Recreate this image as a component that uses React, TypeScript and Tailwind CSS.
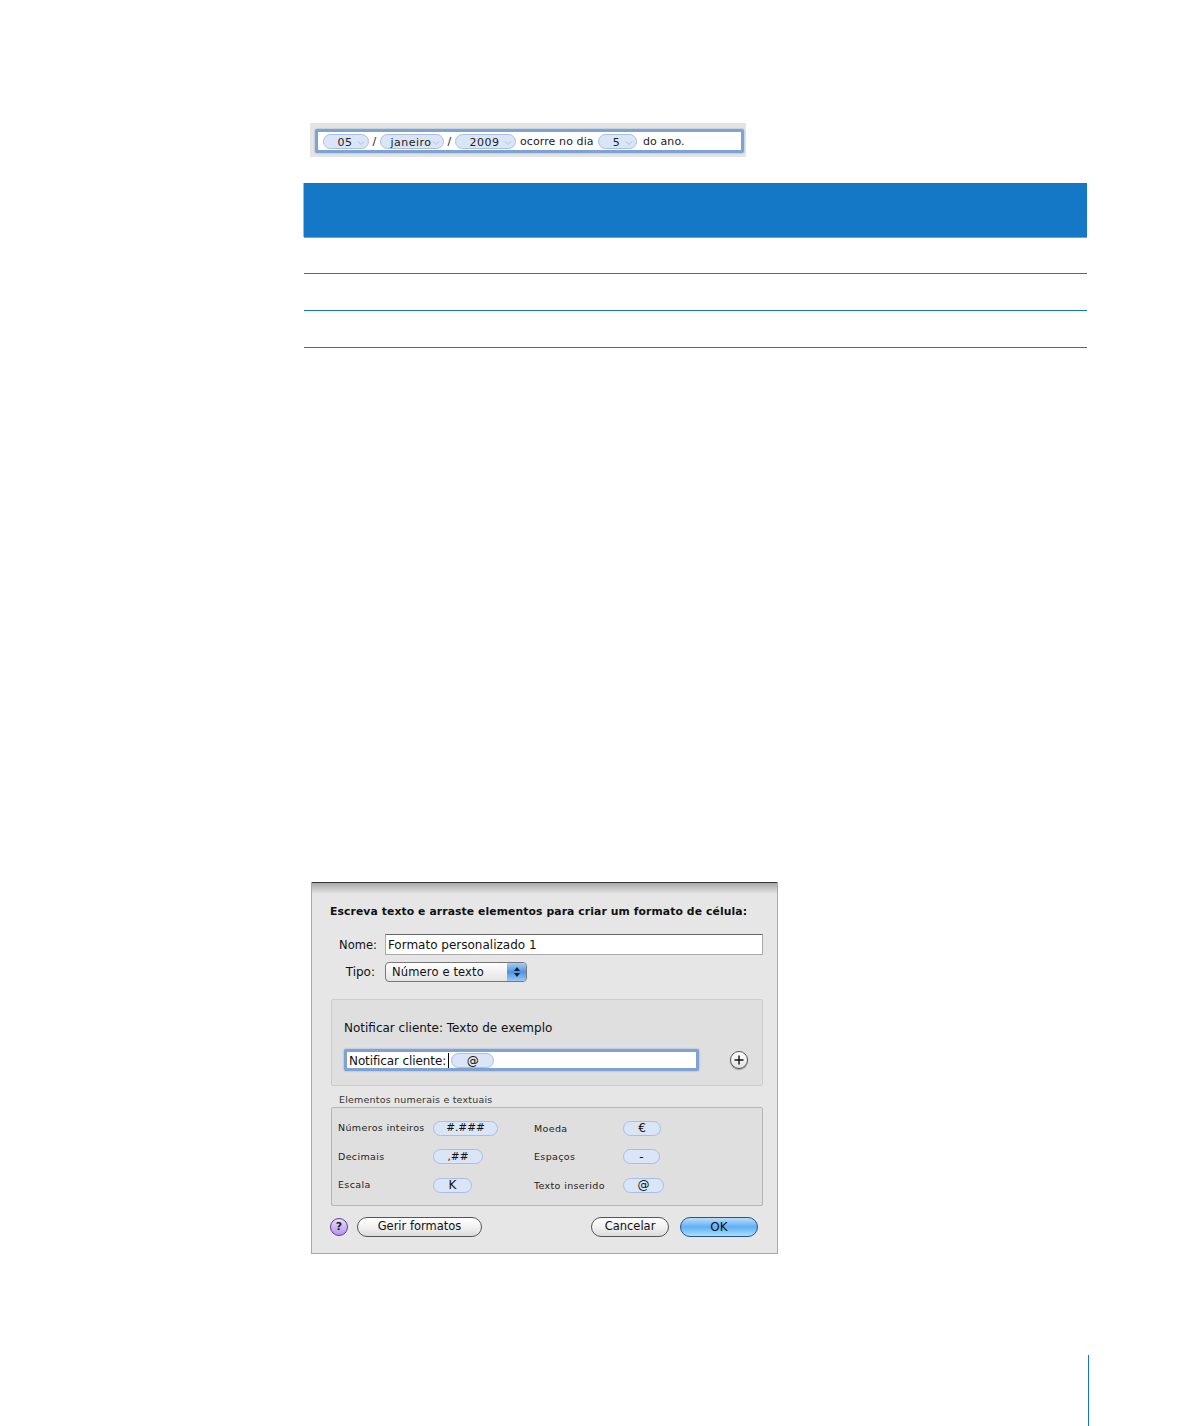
const font = "font-['DejaVu_Sans',sans-serif]";

function Chevron() {
  return (
    <svg width="8" height="6" viewBox="0 0 8 6" className="absolute right-[3px] top-[5px]">
      <path d="M1 1.5 L4 4.5 L7 1.5" fill="none" stroke="#aebcd6" strokeWidth="1" />
    </svg>
  );
}

function DatePill({ label, width }: { label: string; width: string }) {
  return (
    <div className={`relative h-[15px] rounded-full border border-[#a9bde6] bg-[#dbe5f8] pr-[2px] pt-[1px] text-center leading-[14px] tracking-[0.5px] ${width}`}>
      {label}
      <Chevron />
    </div>
  );
}

function Token({ label, width, textSize }: { label: string; width: string; textSize?: string }) {
  return (
    <div className={`flex items-center justify-center h-[15px] rounded-full border border-[#a9bde6] bg-[#dbe5f8] text-[#111] ${textSize ?? "text-[12px]"} ${width}`}>
      {label}
    </div>
  );
}

function ElementRow({ label, labelWidth, token, tokenWidth, h, labelPad, textSize }: { label: string; labelWidth: string; token: string; tokenWidth: string; h: string; labelPad?: string; textSize?: string }) {
  return (
    <div className={`flex items-center ${h}`}>
      <span className={`text-[9.5px] tracking-[0.35px] text-[#222] whitespace-nowrap ${labelWidth} ${labelPad ?? ""}`}>{label}</span>
      <Token label={token} width={tokenWidth} textSize={textSize} />
    </div>
  );
}

function MacButton({ label, width, margin }: { label: string; width: string; margin: string }) {
  return (
    <button className={`flex h-[20px] items-center justify-center rounded-full border border-[#555] bg-gradient-to-b from-[#ffffff] via-[#f1f1f1] to-[#dcdcdc] pb-[1px] text-[11.5px] leading-none text-[#111] ${width} ${margin}`}>
      {label}
    </button>
  );
}

export default function App() {
  return (
    <div className={`h-[1426px] w-[1188px] overflow-hidden bg-white pl-[304px] pt-[123px] ${font}`}>
      {/* date example */}
      <div className="ml-[6px] h-[34px] w-[436px] bg-[#e4e4e4] pl-[5px] pr-[2px] pt-[6px]">
        <div className="flex h-[24px] items-center rounded-[2px] border-[3px] border-[#7fa2d4] bg-white pl-[5px] text-[11px] tracking-[0.1px] text-[#222] shadow-[0_0_2px_#7fa2d4]">
          <DatePill label="05" width="w-[46px]" />
          <span className="w-[11px] pt-[2px] text-center">/</span>
          <DatePill label="janeiro" width="w-[64px]" />
          <span className="w-[11px] pt-[2px] text-center">/</span>
          <DatePill label="2009" width="w-[61px]" />
          <span className="ml-[4px] w-[78px] whitespace-nowrap pt-[2px]">ocorre no dia</span>
          <DatePill label="5" width="w-[39px]" />
          <span className="ml-[6px] whitespace-nowrap pt-[2px]">do ano.</span>
        </div>
      </div>

      {/* empty table */}
      <div className="mt-[26px] w-[783px]">
        <div className="h-[54px] bg-[#1478c6] shadow-[0_1px_0_#6aa6dc,-1px_0_0_#8fbde4]" />
        <div className="h-[37px] border-b border-[#1478c6]" />
        <div className="h-[37px] border-b border-[#1478c6]" />
        <div className="h-[37px] border-b border-[#1478c6]" />
      </div>

      {/* dialog */}
      <div className="ml-[7px] mt-[534px] h-[372px] w-[467px] border-x border-b border-[#a8a8a8] bg-[#e6e6e6] text-[#111]">
        <div className="h-[12px] border-t border-[#333] bg-gradient-to-b from-[#a9a9a9] to-[#e6e6e6]" />
        <div className="pl-[19px] pr-[14px]">
          <div className="-ml-[1px] mt-[11px] h-[14px] text-[10.8px] font-bold leading-[14px] tracking-[0.1px] whitespace-nowrap">
            Escreva texto e arraste elementos para criar um formato de célula:
          </div>

          <div className="mt-[15px] flex items-center">
            <span className="w-[46px] pt-[2px] text-right text-[11.5px]">Nome:</span>
            <div className="ml-[8px] flex h-[21px] w-[379px] items-center border border-[#aaa] border-t-[#666] bg-white pl-[2px] pt-[1px] text-[12px]">
              Formato personalizado 1
            </div>
          </div>

          <div className="mt-[7px] flex items-center">
            <span className="w-[44px] text-right text-[12px]">Tipo:</span>
            <div className="ml-[10px] flex h-[20px] w-[142px] items-center overflow-hidden rounded-[4px] border border-[#777] bg-gradient-to-b from-[#ffffff] to-[#e4e4e4]">
              <span className="w-[121px] pl-[6px] pt-[1px] text-[11.5px] tracking-[0.15px] whitespace-nowrap">Número e texto</span>
              <div className="flex h-full flex-1 items-center justify-center bg-gradient-to-b from-[#a8cdf5] via-[#4f93e0] to-[#9cc9f5]">
                <svg width="8" height="12" viewBox="0 0 8 12">
                  <path d="M4 1 L7 5 H1 Z M4 11 L1 7 H7 Z" fill="#10203a" />
                </svg>
              </div>
            </div>
          </div>

          <div className="mt-[17px] h-[87px] w-[432px] rounded-[2px] border border-[#cbcbcb] bg-[#dfdfdf] pl-[12px]">
            <div className="mt-[20px] h-[16px] text-[12px] leading-[16px]">Notificar cliente: Texto de exemplo</div>
            <div className="mt-[13px] flex items-center">
              <div className="flex h-[22px] w-[355px] items-center rounded-[2px] border-[3px] border-[#7fa2d4] bg-white pl-[2px] pt-[1px] text-[12px] shadow-[0_0_2px_#7fa2d4]">
                <span className="whitespace-nowrap tracking-[-0.1px]">Notificar cliente:</span>
                <div className="ml-[2px] h-[15px] w-px bg-black" />
                <Token label="@" width="w-[43px] ml-[2px]" />
              </div>
              <div className="ml-[31px] flex h-[18px] w-[18px] items-center justify-center rounded-full border border-[#555] bg-gradient-to-b from-[#ffffff] to-[#e2e2e2] shadow-[0_1px_1px_#999]">
                <svg width="10" height="10" viewBox="0 0 10 10">
                  <path d="M5 0.5 V9.5 M0.5 5 H9.5" stroke="#111" strokeWidth="1.4" />
                </svg>
              </div>
            </div>
          </div>

          <div className="ml-[8px] mt-[7px] h-[14px] text-[9.5px] leading-[13px] tracking-[0.2px] text-[#333]">Elementos numerais e textuais</div>
          <div className="flex h-[99px] w-[432px] rounded-[2px] border border-[#b4b4b4] bg-[#dfdfdf] pl-[6px] pt-[6px]">
            <div className="w-[196px]">
              <ElementRow label="Números inteiros" labelWidth="w-[95px]" token="#.###" tokenWidth="w-[65px]" textSize="text-[10.5px]" h="h-[28px]" />
              <ElementRow label="Decimais" labelWidth="w-[95px]" labelPad="pt-[2px]" token=",##" tokenWidth="w-[50px]" textSize="text-[10.5px]" h="h-[29px]" />
              <ElementRow label="Escala" labelWidth="w-[95px]" token="K" tokenWidth="w-[39px]" h="h-[28px]" />
            </div>
            <div>
              <ElementRow label="Moeda" labelWidth="w-[89px]" labelPad="pt-[2px]" token="€" tokenWidth="w-[38px]" h="h-[28px]" />
              <ElementRow label="Espaços" labelWidth="w-[89px]" labelPad="pt-[2px]" token="-" tokenWidth="w-[37px]" h="h-[29px]" />
              <ElementRow label="Texto inserido" labelWidth="w-[89px]" labelPad="pt-[2px]" token="@" tokenWidth="w-[41px]" h="h-[28px]" />
            </div>
          </div>

          <div className="-ml-[1px] mt-[11px] flex items-center">
            <div className="flex h-[18px] w-[18px] items-center justify-center rounded-full border border-[#5b3f96] bg-gradient-to-b from-[#e9dcfb] to-[#b493ea] text-[11px] font-bold text-[#222]">?</div>
            <MacButton label="Gerir formatos" width="w-[125px]" margin="ml-[9px]" />
            <MacButton label="Cancelar" width="w-[78px]" margin="ml-[109px]" />
            <button className="ml-[11px] h-[20px] w-[78px] rounded-full border border-[#2a4f99] bg-gradient-to-b from-[#b9dcfb] via-[#5fb0f3] to-[#a8e0fc] text-[12px] leading-none text-[#111]">OK</button>
          </div>
        </div>
      </div>

      {/* page number rule */}
      <div className="ml-[784px] mt-[101px] h-[71px] w-px bg-[#1478c6]" />
    </div>
  );
}
